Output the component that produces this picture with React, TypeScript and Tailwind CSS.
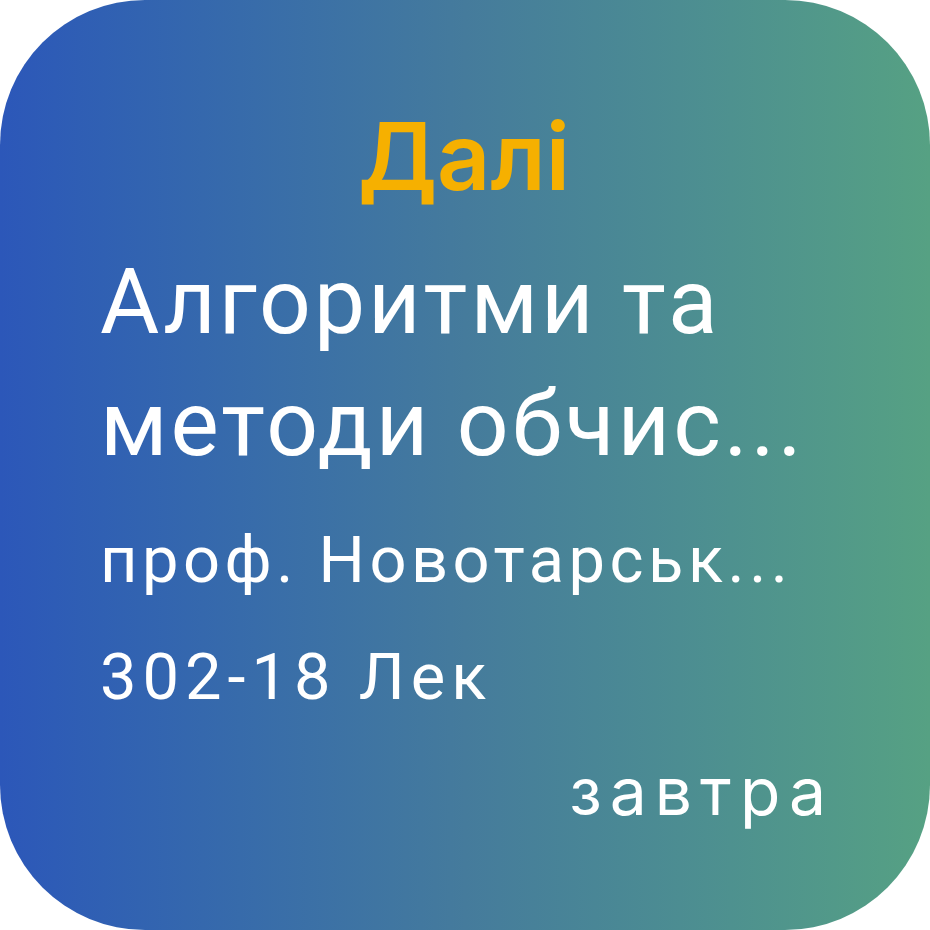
export default function App() {
    return (
        <div className="w-[930px] h-[930px] bg-white">
            <div className="w-full h-full rounded-[145px] bg-gradient-to-r from-[#2c57b9] via-[#457b9c] to-[#56a183] flex flex-col pt-[101px] pl-[100px] pr-[104px] overflow-hidden">
                <div className="text-center font-['Inter',sans-serif] text-[93px] leading-[110px] font-semibold text-[#f6b000] pl-[2px]">
                    Далі
                </div>

                <div className="mt-[30px] flex flex-col font-['Roboto',sans-serif] text-white text-[91px] leading-[122px] tracking-[3px] whitespace-nowrap">
                    <span>Алгоритми та</span>
                    <span>методи обчис...</span>
                </div>

                <div className="mt-[17px] flex flex-col font-['Roboto',sans-serif] text-white text-[65px] leading-[117px] whitespace-nowrap">
                    <span className="tracking-[4.5px]">проф. Новотарськ...</span>
                    <span className="tracking-[6px]">302-18 Лек</span>
                </div>

                <div className="mt-[5px] -mr-[8px] text-right font-['Inter',sans-serif] text-white text-[66px] leading-[100px] tracking-[8px]">
                    завтра
                </div>
            </div>
        </div>
    );
}
